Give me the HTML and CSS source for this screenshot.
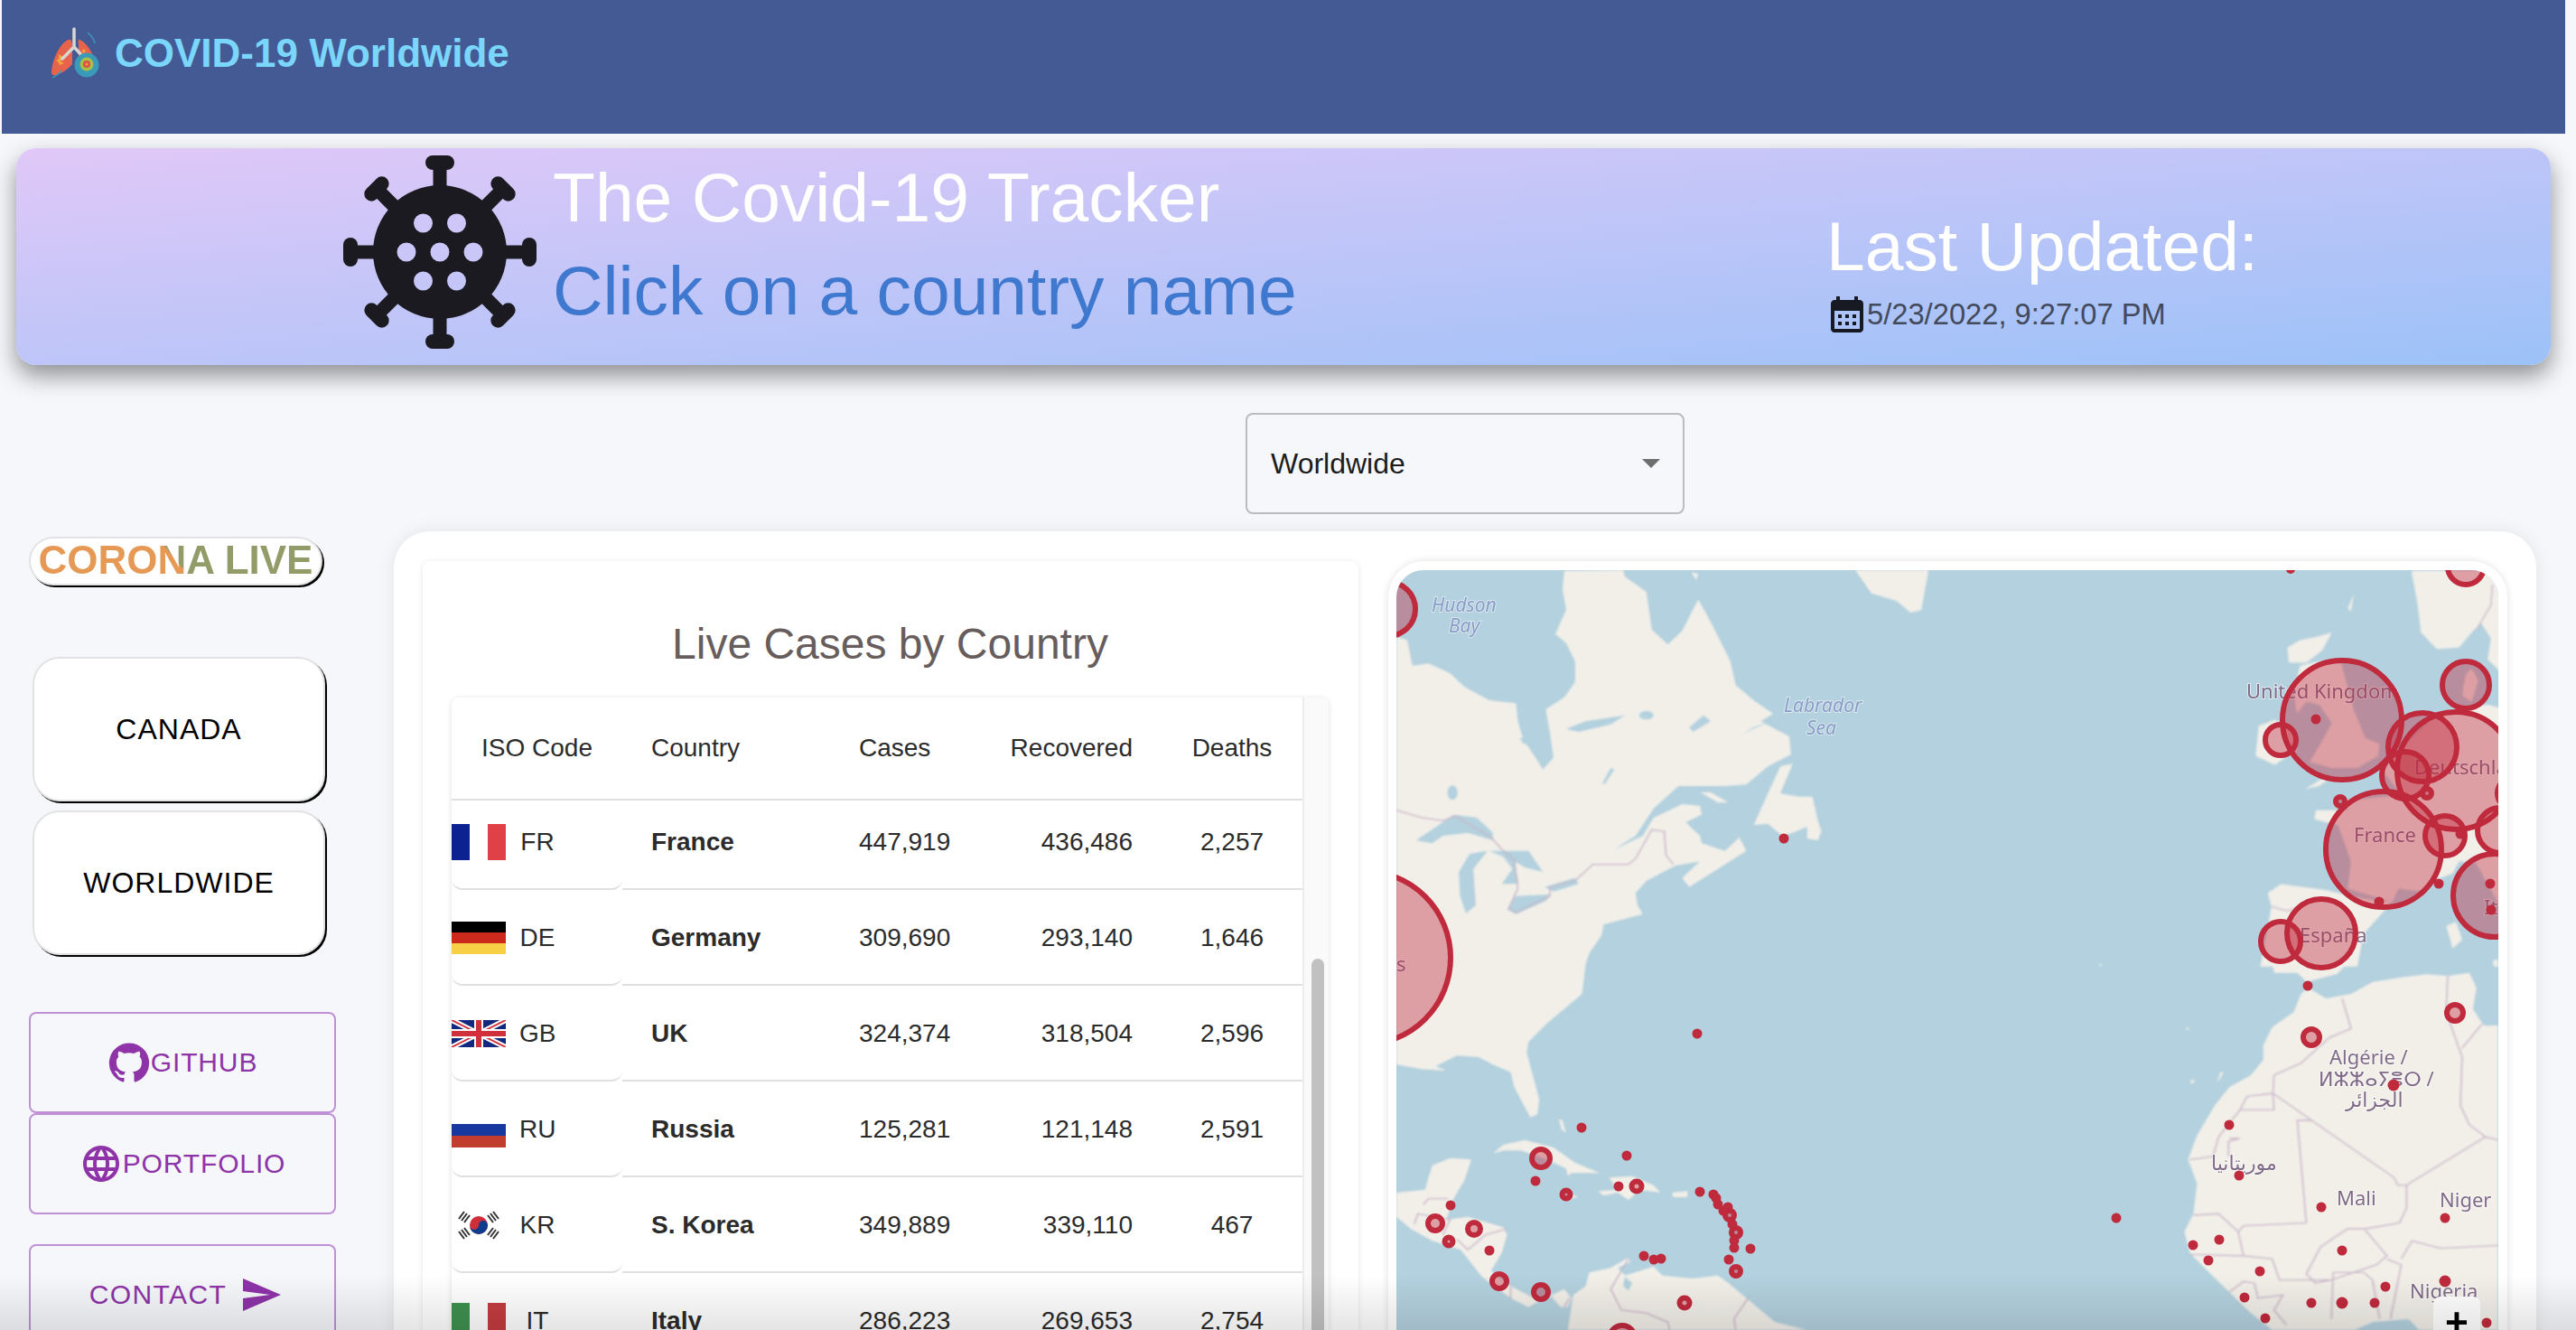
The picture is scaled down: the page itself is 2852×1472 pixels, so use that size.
FILE: index.html
```html
<!DOCTYPE html>
<html lang="en">
<head>
  <meta charset="UTF-8" />
  <title>COVID-19 Worldwide</title>
  <link rel="stylesheet" href="styles.css">
</head>
<body>

  <header class="navbar">
    <svg class="logo" viewBox="0 0 54 56">
      <path fill="#e8634b" d="M20 14C12 16 2 34 1 50c0 3 3 4 6 3 6-2 14-8 17-12V20c0-3-1-7-4-6z"/>
      <path fill="#e8634b" d="M32 14c7 2 15 14 18 26-4-3-10-3-15 1l-4-3V20c0-3-1-7 1-6z"/>
      <path fill="#f0a63c" d="M9 30l5 3-3 5 4 2-5 2-2-4-2-1 3-2zM36 24l3 2-2 3-2-2z"/>
      <path fill="none" stroke="#d9d5d2" stroke-width="3.5" stroke-linecap="round" d="M26 2v20M26 22L13 35M26 22l11 12"/>
      <path fill="none" stroke="#3d9dba" stroke-width="1.5" d="M41 6c4 3 7 8 8 12M2 56c3-1 8-5 10-8"/>
      <circle cx="40" cy="42" r="13.5" fill="#3b9ab8"/>
      <circle cx="40" cy="41" r="7.5" fill="#a8bf45"/>
      <circle cx="40" cy="41" r="4" fill="#d9504a"/>
      <circle cx="40" cy="41" r="1.5" fill="#f0a63c"/>
    </svg>
    <span class="brand">COVID-19 Worldwide</span>
  </header>

  <section class="banner">
    <svg class="virus" viewBox="-107 -107 214 214">
      <g fill="#1a1a20">
        <g id="spike"><rect x="-7.5" y="-100" width="15" height="40"/><rect x="-16" y="-107" width="32" height="16" rx="8"/></g>
        <use href="#spike" transform="rotate(45)"/>
        <use href="#spike" transform="rotate(90)"/>
        <use href="#spike" transform="rotate(135)"/>
        <use href="#spike" transform="rotate(180)"/>
        <use href="#spike" transform="rotate(225)"/>
        <use href="#spike" transform="rotate(270)"/>
        <use href="#spike" transform="rotate(315)"/>
        <path fill-rule="evenodd" d="M-74 0a74 74 0 1 0 148 0a74 74 0 1 0-148 0z
          M-47.500 0a10.500 10.500 0 1 0 21 0a10.500 10.500 0 1 0-21 0z
          M-10.500 0a10.500 10.500 0 1 0 21 0a10.500 10.500 0 1 0-21 0z
          M26.500 0a10.500 10.500 0 1 0 21 0a10.500 10.500 0 1 0-21 0z
          M-29 -32a10.500 10.500 0 1 0 21 0a10.500 10.500 0 1 0-21 0z
          M8 -32a10.500 10.500 0 1 0 21 0a10.500 10.500 0 1 0-21 0z
          M-29 32a10.500 10.500 0 1 0 21 0a10.500 10.500 0 1 0-21 0z
          M8 32a10.500 10.500 0 1 0 21 0a10.500 10.500 0 1 0-21 0z"/>
      </g>
    </svg>
    <div class="banner-titles">
      <h1>The Covid-19 Tracker</h1>
      <h2>Click on a country name</h2>
    </div>
    <div class="updated">
      <h2>Last Updated:</h2>
      <p>
        <svg class="calendar" viewBox="0 0 24 24"><path d="M19 4h-1V2h-2v2H8V2H6v2H5c-1.110 0-1.990.9-1.990 2L3 20c0 1.100.89 2 2 2h14c1.100 0 2-.9 2-2V6c0-1.100-.9-2-2-2zm0 16H5V10h14v10zM9 14H7v-2h2v2zm4 0h-2v-2h2v2zm4 0h-2v-2h2v2zm-8 4H7v-2h2v2zm4 0h-2v-2h2v2zm4 0h-2v-2h2v2z"/></svg>
        5/23/2022, 9:27:07 PM
      </p>
    </div>
  </section>

  <div class="picker-row">
    <div class="picker">
      <span>Worldwide</span>
      <i class="picker-arrow"></i>
    </div>
  </div>

  <div class="page">
    <aside class="sidebar">
      <div class="live-pill"><span>CORONA LIVE</span></div>
      <button class="region-btn first">CANADA</button>
      <button class="region-btn">WORLDWIDE</button>
      <a class="link-btn github">
        <svg class="icon-gh" viewBox="0 0 24 24"><path d="M12 1.270a11 11 0 00-3.480 21.460c.55.09.73-.28.73-.55v-1.840c-3.030.64-3.670-1.460-3.670-1.460-.55-1.290-1.280-1.650-1.280-1.650-.92-.65.1-.65.1-.65 1.100 0 1.730 1.100 1.730 1.100.92 1.650 2.570 1.200 3.210.92a2 2 0 01.64-1.470c-2.470-.27-5.040-1.190-5.040-5.500 0-1.100.46-2.100 1.200-2.840a3.760 3.760 0 010-2.930s.91-.28 3.110 1.100c1.800-.49 3.700-.49 5.500 0 2.100-1.380 3.020-1.100 3.020-1.100a3.760 3.760 0 010 2.930c.83.74 1.200 1.740 1.200 2.940 0 4.210-2.570 5.130-5.040 5.400.45.37.82.92.82 2.020v3.030c0 .27.1.64.73.55A11 11 0 0012 1.270"/></svg>
        GITHUB
      </a>
      <a class="link-btn">
        <svg class="icon-gh" viewBox="0 0 24 24"><path d="M11.990 2C6.470 2 2 6.480 2 12s4.470 10 9.990 10C17.520 22 22 17.520 22 12S17.520 2 11.990 2zm6.930 6h-2.950c-.32-1.250-.78-2.450-1.380-3.560 1.840.63 3.370 1.910 4.330 3.560zM12 4.040c.83 1.200 1.480 2.530 1.910 3.960h-3.820c.43-1.430 1.080-2.760 1.910-3.960zM4.260 14C4.100 13.360 4 12.690 4 12s.1-1.360.26-2h3.380c-.08.66-.14 1.320-.14 2 0 .68.06 1.340.14 2H4.260zm.82 2h2.950c.32 1.250.78 2.450 1.380 3.560-1.840-.63-3.370-1.900-4.330-3.560zm2.950-8H5.080c.96-1.660 2.490-2.930 4.330-3.560C8.810 5.550 8.350 6.750 8.030 8zM12 19.960c-.83-1.200-1.480-2.530-1.910-3.960h3.820c-.43 1.430-1.080 2.760-1.910 3.960zM14.340 14H9.660c-.09-.66-.16-1.320-.16-2 0-.68.07-1.350.16-2h4.680c.09.65.16 1.320.16 2 0 .68-.07 1.340-.16 2zm.25 5.560c.6-1.110 1.060-2.310 1.380-3.560h2.950c-.96 1.650-2.490 2.930-4.330 3.560zM16.360 14c.08-.66.14-1.320.14-2 0-.68-.06-1.340-.14-2h3.380c.16.64.26 1.310.26 2s-.1 1.360-.26 2h-3.380z"/></svg>
        PORTFOLIO
      </a>
      <a class="link-btn contact">
        CONTACT
        <svg class="icon-gh" viewBox="0 0 24 24"><path d="M2.010 21L23 12 2.010 3 2 10l15 2-15 2z"/></svg>
      </a>
    </aside>

    <main class="board">
      <section class="live-card">
        <h3>Live Cases by Country</h3>
        <div class="table-box">
          <table>
            <thead>
              <tr>
                <th class="c-iso">ISO Code</th>
                <th class="c-country">Country</th>
                <th class="c-cases">Cases</th>
                <th class="c-rec">Recovered</th>
                <th class="c-deaths">Deaths</th>
              </tr>
            </thead>
            <tbody>
              <tr class="row-fr">
                <td class="c-iso"><div class="iso"><svg class="flag" viewBox="0 0 60 40"><rect width="20" height="40" fill="#0c2290"/><rect x="20" width="20" height="40" fill="#fff"/><rect x="40" width="20" height="40" fill="#e04146"/></svg><span>FR</span></div></td>
                <td class="c-country">France</td><td>447,919</td><td class="c-rec">436,486</td><td class="c-deaths">2,257</td>
              </tr>
              <tr>
                <td class="c-iso"><div class="iso"><svg class="flag" viewBox="0 0 60 36"><rect width="60" height="12" fill="#000"/><rect y="12" width="60" height="12" fill="#cc2a1c"/><rect y="24" width="60" height="12" fill="#f8d046"/></svg><span>DE</span></div></td>
                <td class="c-country">Germany</td><td>309,690</td><td class="c-rec">293,140</td><td class="c-deaths">1,646</td>
              </tr>
              <tr>
                <td class="c-iso"><div class="iso"><svg class="flag" viewBox="0 0 60 30"><rect width="60" height="30" fill="#12287e"/><path d="M0 0l60 30M60 0L0 30" stroke="#fff" stroke-width="6"/><path d="M0 0l60 30M60 0L0 30" stroke="#d0303c" stroke-width="2"/><path d="M30 0v30M0 15h60" stroke="#fff" stroke-width="10"/><path d="M30 0v30M0 15h60" stroke="#d0303c" stroke-width="6"/></svg><span>GB</span></div></td>
                <td class="c-country">UK</td><td>324,374</td><td class="c-rec">318,504</td><td class="c-deaths">2,596</td>
              </tr>
              <tr>
                <td class="c-iso"><div class="iso"><svg class="flag" viewBox="0 0 60 40"><rect width="60" height="14" fill="#fff"/><rect y="14" width="60" height="13" fill="#17389f"/><rect y="27" width="60" height="13" fill="#c13e2e"/></svg><span>RU</span></div></td>
                <td class="c-country">Russia</td><td>125,281</td><td class="c-rec">121,148</td><td class="c-deaths">2,591</td>
              </tr>
              <tr>
                <td class="c-iso"><div class="iso"><svg class="flag" viewBox="0 0 60 40"><circle cx="30" cy="20" r="10" fill="#cd2e3a"/><path d="M20 20a5 5 0 0 0 10 0a5 5 0 0 1 10 0a10 10 0 0 1-20 0z" fill="#0f3c8c"/><path d="M14 5l-6 8M17 7l-6 8M20 9l-6 8M46 5l6 8M43 7l6 8M40 9l6 8M14 35l-6-8M17 33l-6-8M20 31l-6-8M46 35l6-8M43 33l6-8M40 31l6-8" stroke="#333" stroke-width="2"/></svg><span>KR</span></div></td>
                <td class="c-country">S. Korea</td><td>349,889</td><td class="c-rec">339,110</td><td class="c-deaths">467</td>
              </tr>
              <tr>
                <td class="c-iso"><div class="iso"><svg class="flag" viewBox="0 0 60 40"><rect width="20" height="40" fill="#3f9150"/><rect x="20" width="20" height="40" fill="#fff"/><rect x="40" width="20" height="40" fill="#c43c3f"/></svg><span>IT</span></div></td>
                <td class="c-country">Italy</td><td>286,223</td><td class="c-rec">269,653</td><td class="c-deaths">2,754</td>
              </tr>
            </tbody>
          </table>
          <div class="scroll-track"><div class="scroll-thumb"></div></div>
        </div>
      </section>

      <section class="map-card">
        <div class="map">
          <svg class="map-svg" viewBox="1546 631 1220 841">
            <g class="land">
              <!-- canada, eastern us -->
              <g transform="translate(1546 625) scale(.3954 .3333)">
                <path d="M0 240L30 250 45 335 90 328 150 360 190 405 260 450 335 460 340 520 355 580 395 650 410 680 440 640 430 560 418 480 470 440 500 390 500 320 475 260 445 230 475 150 465 80 470 20 635 18 640 40 700 90 715 215 760 265 800 220 845 115 880 190 935 320 950 400 1000 450 1055 495 1020 520 1100 570 1105 630 1040 670 980 730 920 735 790 735 720 810 670 900 610 945 690 900 720 840 800 795 850 800 855 830 810 855 850 900 855 925 920 950 960 905 980 950 900 1010 820 1070 800 1040 850 985 780 1000 700 1050 670 1090 675 1130 690 1160 580 1195 575 1230 540 1290 0 1290z"/>
                <path d="M1000 865L1040 760 1075 670 1110 660 1075 760 1130 770 1165 770 1180 850 1190 885 1180 915 1150 910 1150 870 1110 890 1080 900 1040 860z"/>
                <path d="M850 755L880 755 930 790 900 790zM825 25L845 30 840 52zM1285 18L1490 18 1470 150 1440 160 1400 120 1330 95z"/>
                <g class="lake">
                  <path d="M55 915L100 880 160 830 225 840 270 890 270 915 200 890 130 900 100 925z"/>
                  <path d="M175 1020L205 960 255 950 215 1010 222 1130 195 1158 178 1100z"/>
                  <path d="M260 950L370 950 410 1020 360 1005 330 985 342 1060 295 1060 325 1010 300 970z"/>
                  <path d="M310 1145L335 1100 430 1095 420 1115 335 1160zM415 1070L500 1040 510 1060 440 1085z"/>
                  <path d="M475 545L530 520 640 500 600 530 510 555zM820 540L860 500 880 520 830 555zM575 730L600 675 610 680 585 725zM970 560L1050 520 1000 540zM345 575L380 575 385 600 355 595z"/>
                  <ellipse cx="157" cy="757" rx="14" ry="24"/>
                  <ellipse cx="700" cy="500" rx="20" ry="14"/>
                </g>
                <path class="border" d="M0 815L70 840 130 850 165 835 265 905 295 945 330 980 340 1075 315 1140 335 1155 430 1100 430 1070 500 1050 550 995 650 995 670 975 715 880 750 885 755 965 775 995"/>
              </g>
              <!-- southeast us, caribbean, central and south america -->
              <g transform="translate(1546 1050) scale(.3954 .3333)">
                <path d="M0 0L545 0 530 50 520 150 470 200 420 250 370 310 365 345 400 500 395 550 375 560 330 460 320 410 270 385 230 360 170 355 110 390 140 405 70 400 0 385z"/>
                <path d="M270 680L300 650 360 635 440 660 500 710 570 745 490 745 480 755 475 730 420 700 350 670 300 670z"/>
                <path d="M0 810L80 800 100 720 150 695 210 700 190 770 160 830 140 900 200 890 300 925 310 950 295 1010 265 1070 320 1120 400 1170 470 1130 490 1160 480 1190 460 1190 430 1150 370 1190 320 1160 240 1090 180 1000 100 970 40 930 0 890z"/>
                <path d="M565 805L620 800 595 760 660 755 720 785 740 810 680 800 650 835 620 810 580 820zM772 810L815 805 815 825 775 825zM490 815L510 825 480 830zM455 565L465 570 475 612 462 600z"/>
                <path d="M480 1266L495 1150 530 1120 540 1075 600 1060 650 1025 655 1040 620 1060 640 1085 720 1055 745 1085 830 1095 900 1085 930 1110 990 1170 1060 1240 1150 1266z"/>
                <path class="lake" d="M640 1090L660 1110 650 1135 635 1120z"/>
                <path class="border" d="M650 1030L600 1130 630 1200 700 1210 760 1240 765 1266M985 1160L945 1230 950 1266M470 1190L485 1160M75 850L90 830 145 830M50 915L60 880 150 900 130 950M170 965L200 1000 250 950 310 930M320 1120L320 1165"/>
              </g>
              <!-- west africa -->
              <g transform="translate(2230 1050) scale(.3968 .3333)">
                <path d="M800 150L780 210 720 260 695 320 695 370 660 420 600 460 560 520 510 620 485 700 510 780 500 880 475 940 490 1010 540 1070 600 1140 660 1210 720 1266 950 1266 1000 1240 1100 1230 1130 1266 1350 1266 1350 255 1310 255 1280 200 1290 130 1270 80 1210 90 1150 85 1080 95 1000 110 940 150 870 165 820 130z"/>
                <path d="M690 0L720 50 725 80 790 80 815 110 900 85 945 30 965 0zM480 260L492 266 482 270zM235 50L250 55 240 58zM1335 40L1350 35 1350 62 1338 58zM575 410L585 410 565 448zM490 440L505 432 498 450z"/>
                <path class="border" d="M915 165L940 265 880 295 800 380 725 420 722 480 830 570 1060 760 1070 785 1095 785 1315 625 1350 635M722 480L725 535 630 535 650 490 722 480M630 535L570 625 555 690 490 700M600 630L630 630 598 640 598 690M830 570L790 570 815 910 640 920 625 940 570 880 500 885M1095 785L1095 860 1075 910 980 930 930 930 855 990 815 1080 840 1110 885 1100 1010 1050 1040 1020 980 935M1210 90L1205 210 1250 360 1245 520 1270 585 1315 625M1305 250L1250 330M1080 1030L1110 970 1190 995 1350 985M490 1015L640 1020 625 940M640 1020L720 1030 740 1100 885 1100M890 1075L975 1075 1000 1100 1020 1230M890 1075L885 1230M1040 1030L1080 1050 1050 1230M600 1140L640 1105 670 1110 680 1160 750 1150 725 1200 760 1250"/>
              </g>
              <!-- europe -->
              <g transform="translate(2300 620) scale(.3521 .3333)">
                <path d="M598 1105L640 1075 780 1095 880 1120 990 1135 900 1240 880 1350 575 1350 610 1150z"/>
                <path d="M700 350L740 340 800 330 830 345 870 500 905 590 950 610 945 650 880 690 800 690 730 670 770 600 800 540 760 480 720 470 690 510 680 440z"/>
                <path d="M665 340L660 290 700 265 750 255 800 240 770 300 720 340zM570 550L620 530 680 555 690 630 620 680 560 650zM715 760L770 725 800 720 760 750zM850 160L870 110 860 170z"/>
                <path d="M1050 35L1330 35 1330 260 1300 260 1270 210 1240 240 1200 290 1130 295 1080 240 1070 150z"/>
                <path d="M1330 490L1290 480 1190 495 1120 520 1020 620 960 700 1020 780 920 790 835 800 850 830 750 830 745 860 820 880 860 1000 850 1090 990 1135 1010 1090 1080 1100 1130 1060 1180 1040 1200 1000 1250 1000 1330 1150z"/>
                <path d="M1220 380L1240 360 1260 400 1240 470 1210 450zM1300 260L1330 260 1330 370 1290 330zM1160 1215L1190 1200 1210 1260 1180 1290z"/>
                <path class="border" d="M1305 80L1300 150 1255 230M610 1150L660 1165 700 1150"/>
              </g>
            </g>

            <g class="water-label">
              <text x="1585" y="677">Hudson</text>
              <text x="1604" y="700">Bay</text>
              <text x="1975" y="788">Labrador</text>
              <text x="2000" y="813">Sea</text>
            </g>
            <g class="place-label">
              <text x="2487" y="773">United Kingdom</text>
              <text x="2673" y="857">Deutschland</text>
              <text x="2606" y="932">France</text>
              <text x="2546" y="1043">España</text>
              <text x="2750" y="1012">Italia</text>
              <text x="1546" y="1075">s</text>
              <text x="2579" y="1178">Algérie /</text>
              <text x="2567" y="1202">ⵍⵣⵣⴰⵢⴻⵔ /</text>
              <text x="2597" y="1225">الجزائر</text>
              <text x="2448" y="1295">موريتانيا</text>
              <text x="2587" y="1334">Mali</text>
              <text x="2701" y="1336">Niger</text>
              <text x="2668" y="1437">Nigeria</text>
            </g>

            <g class="bubble">
              <circle cx="1510" cy="1060" r="96"/>
              <circle cx="1537" cy="674" r="30"/>
              <circle cx="2593" cy="797" r="66"/>
              <circle cx="2525" cy="819" r="17"/>
              <circle cx="2730" cy="758" r="26"/>
              <circle cx="2719" cy="853" r="65"/>
              <circle cx="2682" cy="827" r="38"/>
              <circle cx="2663" cy="858" r="26"/>
              <circle cx="2639" cy="940" r="64"/>
              <circle cx="2707" cy="925" r="22"/>
              <circle cx="2768" cy="919" r="25"/>
              <circle cx="2782" cy="878" r="17"/>
              <circle cx="2762" cy="991" r="46"/>
              <circle cx="2570" cy="1033" r="38"/>
              <circle cx="2525" cy="1042" r="22"/>
              <circle cx="2730" cy="627" r="20"/>
              <circle cx="2775" cy="635" r="10"/>
              <circle cx="1706" cy="1282" r="10"/>
              <circle cx="1589" cy="1354" r="8"/>
              <circle cx="1632" cy="1360" r="7"/>
              <circle cx="1660" cy="1418" r="8"/>
              <circle cx="1706" cy="1430" r="8"/>
              <circle cx="1796" cy="1481" r="14"/>
              <circle cx="2559" cy="1148" r="9"/>
              <circle cx="2718" cy="1121" r="9"/>
            </g>
            <g class="ring">
              <circle cx="2687" cy="878" r="5"/>
              <circle cx="2591" cy="887" r="5"/>
              <circle cx="1734" cy="1322" r="4.500"/>
              <circle cx="1812" cy="1313" r="5.500"/>
              <circle cx="1604" cy="1374" r="4.500"/>
              <circle cx="1865" cy="1442" r="5.500"/>
              <circle cx="1922" cy="1407" r="5"/>
              <circle cx="1915" cy="1345" r="5"/>
              <circle cx="1922" cy="1364" r="5"/>
            </g>
            <g class="dot">
              <circle cx="2564" cy="796" r="5.500"/><circle cx="2634" cy="998" r="5.500"/><circle cx="2700" cy="978" r="5.500"/>
              <circle cx="2757" cy="978" r="5.500"/><circle cx="2758" cy="1007" r="5.500"/><circle cx="2724" cy="923" r="5.500"/>
              <circle cx="2536" cy="630" r="5"/><circle cx="1975" cy="928" r="5.500"/>
              <circle cx="1879" cy="1144" r="5.500"/><circle cx="1751" cy="1248" r="5.500"/><circle cx="1801" cy="1279" r="5.500"/>
              <circle cx="1700" cy="1307" r="5.500"/><circle cx="1792" cy="1313" r="5.500"/><circle cx="1606" cy="1334" r="5.500"/>
              <circle cx="1649" cy="1384" r="5.500"/><circle cx="1882" cy="1319" r="5.500"/><circle cx="1820" cy="1390" r="5.500"/>
              <circle cx="1831" cy="1394" r="5.500"/><circle cx="1839" cy="1393" r="5.500"/><circle cx="1914" cy="1394" r="5.500"/>
              <circle cx="1938" cy="1382" r="5.500"/><circle cx="1897" cy="1322" r="5.500"/><circle cx="1900" cy="1326" r="5.500"/>
              <circle cx="1902" cy="1333" r="5.500"/><circle cx="1913" cy="1336" r="5.500"/><circle cx="1908" cy="1340" r="5.500"/>
              <circle cx="1918" cy="1355" r="5.500"/><circle cx="1920" cy="1373" r="5.500"/><circle cx="1920" cy="1381" r="5.500"/>
              <circle cx="2555" cy="1091" r="5.500"/><circle cx="2650" cy="1201" r="6.500"/><circle cx="2468" cy="1245" r="5.500"/>
              <circle cx="2479" cy="1301" r="5.500"/><circle cx="2570" cy="1336" r="5.500"/><circle cx="2707" cy="1348" r="5.500"/>
              <circle cx="2343" cy="1348" r="5.500"/><circle cx="2457" cy="1372" r="5.500"/><circle cx="2428" cy="1378" r="5.500"/>
              <circle cx="2445" cy="1395" r="5.500"/><circle cx="2502" cy="1407" r="5.500"/><circle cx="2593" cy="1384" r="5.500"/>
              <circle cx="2707" cy="1418" r="6.500"/><circle cx="2485" cy="1436" r="5.500"/><circle cx="2559" cy="1442" r="5.500"/>
              <circle cx="2593" cy="1442" r="6.500"/><circle cx="2629" cy="1442" r="5.500"/><circle cx="2641" cy="1424" r="5.500"/>
              <circle cx="2508" cy="1459" r="5.500"/><circle cx="2753" cy="1464" r="5.500"/>
            </g>
          </svg>
          <button class="zoom-in">+</button>
        </div>
      </section>
    </main>
  </div>

  <div class="bottom-fade"></div>

</body>
</html>
```

FILE: styles.css
```css
* {
  box-sizing: border-box;
  margin: 0;
  padding: 0;
}
html,
body {
  height: 1472px;
  overflow: hidden;
}
body {
  font-family: "Liberation Sans", Arial, sans-serif;
  background: #f5f7fb;
}

/* Navbar */
.navbar {
  height: 148px;
  margin: 0 12px 0 2px;
  padding: 30px 0 0 54px;
  background: #435a94;
  display: flex;
  align-items: flex-start;
  gap: 17px;
}
.logo {
  width: 54px;
  height: 56px;
}
.brand {
  color: #7ad6fa;
  font-size: 44px;
  font-weight: bold;
  line-height: 58px;
}

/* Banner */
.banner {
  height: 240px;
  margin: 16px 28px 0 18px;
  padding-left: 362px;
  display: flex;
  align-items: center;
  border-radius: 22px;
  background: linear-gradient(to bottom right, #e0c8f8, #9cc2f8);
  box-shadow: 0 12px 26px rgba(0, 0, 0, 0.42);
}
.virus {
  width: 214px;
  height: 214px;
  flex: none;
  margin-top: -10px;
}
.banner-titles {
  margin: -28px 0 0 18px;
  width: 1410px;
}
.banner-titles h1,
.banner-titles h2,
.updated h2 {
  font-size: 76.8px;
  font-weight: normal;
  line-height: 103px;
}
.banner-titles h1,
.updated h2 {
  color: #fff;
}
.banner-titles h2 {
  color: #3f78cf;
}
.updated {
  margin-top: 24px;
}
.updated p {
  display: flex;
  align-items: center;
  padding-left: 5px;
  font-size: 32.7px;
  color: #424a5c;
}
.calendar {
  width: 48px;
  height: 48px;
  margin: 0 -2px 0 -6px;
  fill: #171a23;
}

/* Country select */
.picker-row {
  padding: 53px 987px 0 0;
  display: flex;
  justify-content: flex-end;
}
.picker {
  width: 486px;
  height: 112px;
  padding: 0 25px 0 26px;
  border: 2px solid #bcbcbf;
  border-radius: 8px;
  display: flex;
  align-items: center;
  justify-content: space-between;
  font-size: 32px;
  color: #1c1c1c;
}
.picker-arrow {
  border-top: 10px solid #6e6e6e;
  border-left: 10px solid transparent;
  border-right: 10px solid transparent;
}

.page {
  display: flex;
  padding-top: 19px;
}

/* Sidebar */
.sidebar {
  width: 436px;
  flex: none;
  display: flex;
  flex-direction: column;
  align-items: flex-start;
  padding-left: 32px;
}
.live-pill {
  width: 325px;
  height: 54px;
  margin-top: 6px;
  border: 2px solid #e2e2e2;
  border-radius: 28px;
  background: #fff;
  box-shadow: 2px 2px 0 #000;
  text-align: center;
  line-height: 48px;
}
.live-pill span {
  font-size: 44px;
  font-weight: bold;
  background: linear-gradient(51deg, #e59954 50%, #929c68 50%);
  -webkit-background-clip: text;
  background-clip: text;
  color: transparent;
}
.region-btn {
  width: 324px;
  height: 160px;
  margin: 10px 0 0 4px;
  border: 2px solid #e2e2e2;
  border-radius: 30px;
  background: #fff;
  box-shadow: 2px 2px 0 #000;
  font-family: inherit;
  font-size: 32px;
  letter-spacing: 1px;
  color: #000;
}
.region-btn.first {
  margin-top: 79px;
}
.link-btn {
  width: 340px;
  height: 112px;
  border: 2px solid #bf90d6;
  border-radius: 8px;
  display: flex;
  align-items: center;
  justify-content: center;
  font-size: 30px;
  letter-spacing: 0.86px;
  color: #8e33a8;
}
.link-btn.github {
  margin-top: 63px;
}
.link-btn.contact {
  margin-top: 33px;
  padding-left: 8px;
  gap: 14px;
  letter-spacing: 1.4px;
}
.icon-gh {
  width: 48px;
  height: 48px;
  fill: #8e33a8;
}

/* Main board */
.board {
  width: 2372px;
  flex: none;
  height: 1000px;
  padding: 33px 32px 0;
  display: flex;
  gap: 33px;
  background: #fff;
  border-radius: 40px;
  box-shadow: 0 0 20px rgba(0, 0, 0, 0.08);
}
.live-card {
  width: 1036px;
  flex: none;
  padding: 0 33px 0 32px;
  border-radius: 8px;
  box-shadow: 0 1px 6px rgba(0, 0, 0, 0.1);
}
.live-card h3 {
  height: 151px;
  padding-top: 62px;
  text-align: center;
  font-size: 48px;
  line-height: 60px;
  font-weight: normal;
  color: #685d5d;
}
.table-box {
  display: flex;
  border-radius: 8px;
  box-shadow: 0 1px 6px rgba(0, 0, 0, 0.12);
}
table {
  width: 942px;
  flex: none;
  align-self: flex-start;
  table-layout: fixed;
  border-collapse: separate;
  border-spacing: 0;
  font-size: 28px;
  color: #2b2b2b;
}
thead th {
  height: 114px;
  font-weight: normal;
  text-align: left;
  padding: 0 32px;
  border-bottom: 2px solid #e0e0e0;
}
tbody td {
  height: 106px;
  padding: 2px 32px 0;
  border-bottom: 2px solid #e0e0e0;
}
tbody .row-fr td {
  height: 99px;
  padding-top: 0;
  padding-bottom: 6px;
}
th.c-iso {
  width: 189px;
  text-align: center;
  padding: 0;
}
th.c-country {
  width: 230px;
}
th.c-cases {
  width: 166px;
}
th.c-rec {
  width: 201px;
}
.c-rec {
  text-align: right;
}
thead th.c-rec {
  text-align: right;
}
thead th.c-deaths,
tbody td.c-deaths {
  text-align: center;
  padding-left: 0;
  padding-right: 0;
}
thead th.c-iso,
tbody td.c-iso {
  padding-left: 0;
  padding-right: 0;
}
tbody td.c-iso {
  border-radius: 0 0 12px 12px;
}
tbody td.c-country {
  font-weight: bold;
}
.iso {
  display: flex;
  align-items: center;
  gap: 15px;
}
.iso span {
  width: 40px;
  text-align: center;
}
.flag {
  width: 60px;
  flex: none;
  display: block;
}
.scroll-track {
  width: 29px;
  flex: none;
  padding: 289px 5px 0 8px;
  background: #fafafa;
  border-left: 2px solid #ececec;
}
.scroll-thumb {
  height: 600px;
  border-radius: 8px;
  background: #c1c1c1;
}

/* Map */
.map-card {
  width: 1239px;
  flex: none;
  padding: 10px 10px 0 9px;
  border-radius: 40px;
  background: #fff;
  box-shadow: 0 0 8px rgba(0, 0, 0, 0.12);
}
.map {
  position: relative;
  width: 1220px;
  height: 960px;
  border-radius: 30px 30px 0 0;
  overflow: hidden;
  background: #b3d1de;
}
.map-svg {
  display: block;
  width: 1220px;
  height: 841px;
}
.land {
  fill: #f2efe9;
  filter: blur(1px);
}
.lake {
  fill: #b3d1de;
}
.border {
  fill: none;
  stroke: #c9b6c8;
  stroke-width: 4;
}
.water-label text {
  font-family: "Noto Sans", "DejaVu Sans", sans-serif;
  font-style: italic;
  font-size: 21px;
  fill: #8a9cc8;
  stroke: rgba(255, 255, 255, 0.5);
  stroke-width: 2px;
  paint-order: stroke;
}
.place-label text {
  font-family: "Noto Sans", "DejaVu Sans", sans-serif;
  font-size: 22px;
  fill: #7f6a88;
  stroke: rgba(255, 255, 255, 0.6);
  stroke-width: 2px;
  paint-order: stroke;
}
.bubble circle {
  fill: #c0283c;
  fill-opacity: 0.4;
  stroke: #bf2a3d;
  stroke-width: 6;
}
.ring circle {
  fill: #c0283c;
  fill-opacity: 0.4;
  stroke: #bf2a3d;
  stroke-width: 6;
}
.dot circle {
  fill: #bf2a3d;
}
.zoom-in {
  position: absolute;
  top: 804px;
  right: 20px;
  width: 52px;
  height: 52px;
  border: none;
  border-radius: 8px;
  background: #fff;
  color: #000;
  font-family: "Liberation Mono", monospace;
  font-size: 44px;
  font-weight: bold;
  line-height: 52px;
  padding-top: 6px;
}

/* dark strip along the window's lower edge */
.bottom-fade {
  position: absolute;
  left: 0;
  right: 0;
  top: 1412px;
  height: 60px;
  background: linear-gradient(rgba(0, 0, 0, 0), rgba(0, 0, 0, 0.1));
  pointer-events: none;
}
```
